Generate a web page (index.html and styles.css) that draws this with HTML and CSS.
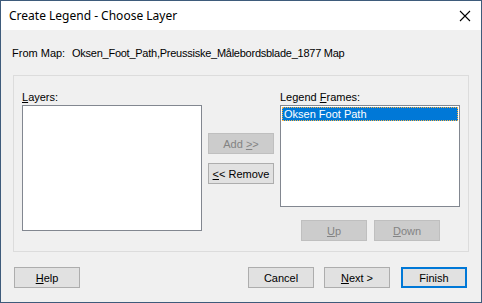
FILE: index.html
```html
<!DOCTYPE html>
<html lang="en">
<head>
    <meta charset="UTF-8">
    <meta name="viewport" content="width=device-width, initial-scale=1.0">
    <title>Create Legend - Choose Layer</title>
    <link rel="stylesheet" href="styles.css">
</head>
<body>
    <div class="window">
        <div class="titlebar">
            <span class="title">Create Legend - Choose Layer</span>
            <svg class="close" width="12" height="12" viewBox="0 0 12 12">
                <path d="M1 1 L11 11 M11 1 L1 11" stroke="#000" stroke-width="1.1" fill="none"/>
            </svg>
        </div>

        <div class="dialog">
            <div class="from-row">
                <span class="from-label">From Map:</span>
                <span class="from-value">Oksen_Foot_Path,Preussiske_Målebordsblade_1877 Map</span>
            </div>

            <div class="group">
                <div class="col">
                    <div class="label"><u>L</u>ayers:</div>
                    <div class="listbox layers-list"></div>
                </div>

                <div class="mid">
                    <button class="btn" disabled>Add <u>&gt;</u>&gt;</button>
                    <button class="btn"><u>&lt;</u>&lt; Remove</button>
                </div>

                <div class="col">
                    <div class="label">Legend <u>F</u>rames:</div>
                    <div class="listbox frames-list">
                        <div class="item selected">Oksen Foot Path</div>
                    </div>
                    <div class="order-buttons">
                        <button class="btn" disabled><u>U</u>p</button>
                        <button class="btn" disabled><u>D</u>own</button>
                    </div>
                </div>
            </div>

            <div class="footer">
                <button class="btn"><u>H</u>elp</button>
                <div class="footer-right">
                    <button class="btn">Cancel</button>
                    <button class="btn"><u>N</u>ext &gt;</button>
                    <button class="btn default">Finish</button>
                </div>
            </div>
        </div>
    </div>
</body>
</html>
```

FILE: styles.css
```css
html, body {
    margin: 0;
    padding: 0;
}
body {
    font-family: "Liberation Sans", Arial, sans-serif;
    font-size: 11px;
    color: #000;
    background-color: #f0f0f0;
}
.window {
    width: 482px;
    height: 303px;
    box-sizing: border-box;
    border: 1px solid #3e5b7b;
    background-color: #f0f0f0;
    display: flex;
    flex-direction: column;
}
.titlebar {
    height: 29px;
    background-color: #fff;
    display: flex;
    align-items: center;
    justify-content: space-between;
    padding: 0 10px 0 8px;
}
.title {
    font-family: "Noto Sans", "Open Sans", sans-serif;
    font-size: 12px;
    line-height: 16px;
}
.close {
    display: block;
    margin-top: 1px;
}
.dialog {
    flex: 1;
    padding: 0 12px;
    display: flex;
    flex-direction: column;
}
.from-row {
    margin-top: 15px;
    margin-left: -1px;
    line-height: 16px;
    white-space: nowrap;
    display: flex;
}
.from-label {
    width: 60px;
    flex: none;
}
.from-value {
    letter-spacing: -0.25px;
}
.group {
    margin-top: 14px;
    height: 177px;
    box-sizing: border-box;
    border: 1px solid #dcdcdc;
    padding: 14px 8px 0 8px;
    display: flex;
    gap: 6px;
}
.col {
    width: 180px;
    display: flex;
    flex-direction: column;
}
.label {
    line-height: 15px;
    height: 15px;
}
.listbox {
    box-sizing: border-box;
    border: 1px solid #828790;
    background-color: #fff;
    padding: 1px;
}
.layers-list {
    height: 126px;
}
.frames-list {
    height: 102px;
}
.item {
    line-height: 14px;
    height: 14px;
    padding-left: 2px;
    white-space: nowrap;
}
.item.selected {
    background-color: #0078d7;
    color: #fff;
    outline: 1px dotted #f7b245;
    outline-offset: -1px;
}
.mid {
    width: 66px;
    padding-top: 43px;
    display: flex;
    flex-direction: column;
    gap: 9px;
}
.btn {
    width: 66px;
    height: 21px;
    box-sizing: border-box;
    border: 1px solid #adadad;
    background-color: #e1e1e1;
    font-family: inherit;
    font-size: 11px;
    color: #000;
    padding: 0;
    line-height: 18px;
}
.btn:disabled {
    background-color: #cccccc;
    border-color: #bfbfbf;
    color: #838383;
}
.btn.default {
    border: 2px solid #0078d7;
}
.order-buttons {
    display: flex;
    justify-content: flex-end;
    gap: 7px;
    margin-top: 13px;
    padding-right: 20px;
}
.footer {
    margin-top: 15px;
    padding: 0 2px 0 1px;
    display: flex;
    justify-content: space-between;
}
.footer-right {
    display: flex;
    gap: 10px;
}
.footer-right .default {
    margin-left: 1px;
}
```
